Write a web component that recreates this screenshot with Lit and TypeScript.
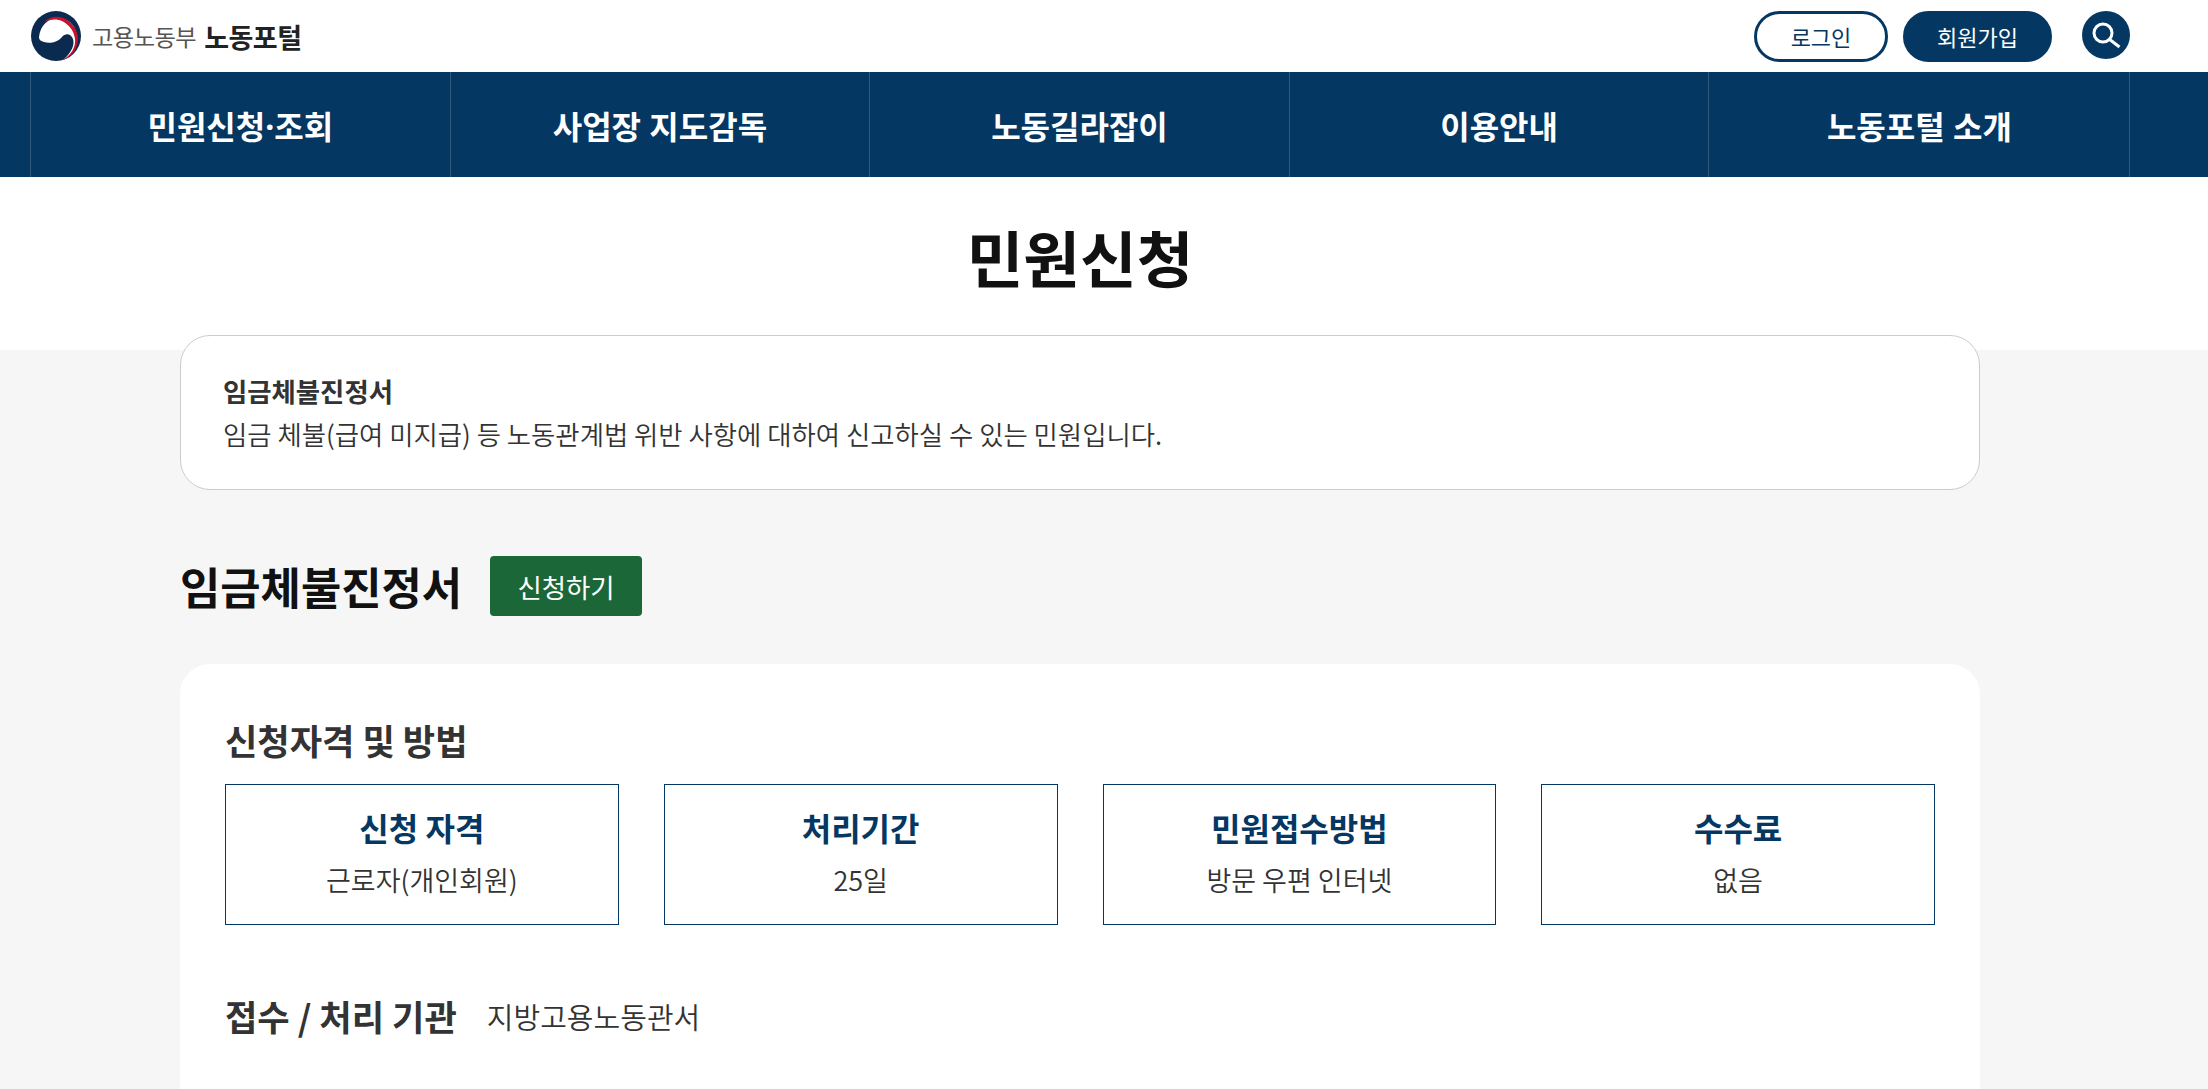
import { LitElement, html, css } from 'lit';
import { customElement } from 'lit/decorators.js';

const NAV_ITEMS = ['민원신청·조회', '사업장 지도감독', '노동길라잡이', '이용안내', '노동포털 소개'];

const INFO_BOXES = [
  { title: '신청 자격', text: '근로자(개인회원)' },
  { title: '처리기간', text: '25일' },
  { title: '민원접수방법', text: '방문 우편 인터넷' },
  { title: '수수료', text: '없음' },
];

@customElement('app-root')
export class AppRoot extends LitElement {
  static override styles = css`
    :host {
      display: block;
      height: 100vh;
      overflow: hidden;
      background: #f6f6f6;
      color: #333;
      font-family: 'Noto Sans CJK KR', 'Noto Sans', sans-serif;
    }

    /* Top bar */
    .top {
      height: 72px;
      background: #fff;
      display: flex;
      align-items: center;
      justify-content: space-between;
      padding: 0 78px 0 30px;
      box-sizing: border-box;
    }

    .logo {
      display: flex;
      align-items: center;
      gap: 11px;
    }

    .logo svg {
      width: 51px;
      height: 50px;
    }

    .logo-sub {
      font-size: 23.2px;
      color: #555;
      letter-spacing: -0.5px;
    }

    .logo-main {
      font-size: 27px;
      font-weight: 700;
      color: #222;
      margin-left: -3px;
      letter-spacing: -0.5px;
    }

    .actions {
      display: flex;
      align-items: center;
    }

    .btn {
      box-sizing: border-box;
      height: 51px;
      border-radius: 26px;
      border: 3px solid #053763;
      display: flex;
      align-items: center;
      justify-content: center;
      font-size: 22px;
    }

    .btn.login {
      width: 134px;
      color: #053763;
      background: #fff;
    }

    .btn.join {
      width: 149px;
      margin-left: 15px;
      color: #fff;
      background: #053763;
    }

    .search {
      width: 48px;
      height: 48px;
      margin-left: 30px;
      margin-bottom: 3px;
      border-radius: 50%;
      background: #053763;
      display: flex;
      align-items: center;
      justify-content: center;
    }

    /* Main nav */
    nav {
      height: 105px;
      background: #053763;
      padding-left: 30px;
      display: flex;
      font-family: 'Noto Sans', 'Noto Sans CJK KR', sans-serif;
    }

    .nav-item {
      box-sizing: border-box;
      width: 419.6px;
      border-left: 1px solid #315a7d;
      display: flex;
      align-items: center;
      justify-content: center;
      color: #fff;
      font-size: 32px;
      font-weight: 700;
    }

    .nav-item.last {
      width: 422px;
      border-right: 1px solid #315a7d;
    }

    /* Page title */
    .page-title {
      box-sizing: border-box;
      width: 2160px;
      height: 173px;
      padding-top: 38px;
      background: #fff;
      display: flex;
      justify-content: center;
      box-shadow: 48px 0 0 #fff;
    }

    h1 {
      margin: 0;
      font-size: 61.6px;
      line-height: 84px;
      font-weight: 700;
      color: #111;
    }

    .content {
      width: 1800px;
      margin: -15px 0 0 180px;
      position: relative;
    }

    .notice {
      box-sizing: border-box;
      height: 155px;
      padding: 34px 42px;
      background: #fff;
      border: 1px solid #ccc;
      border-radius: 30px;
    }

    .notice-title {
      font-size: 26.4px;
      font-weight: 700;
      line-height: 42px;
    }

    .notice-text {
      font-size: 26.4px;
      line-height: 44px;
      font-weight: 350;
    }

    .heading {
      display: flex;
      align-items: center;
      margin-top: 66px;
      height: 60px;
    }

    h2 {
      margin: 0;
      font-size: 43.8px;
      font-weight: 700;
      color: #111;
    }

    .apply {
      width: 152px;
      height: 60px;
      margin-left: 28px;
      border-radius: 4px;
      background: #1c6737;
      color: #fff;
      font-size: 26.4px;
      display: flex;
      align-items: center;
      justify-content: center;
    }

    .panel {
      box-sizing: border-box;
      margin-top: 48px;
      padding: 53px 45px 45px;
      min-height: 700px;
      background: #fff;
      border-radius: 30px;
    }

    h3 {
      margin: 0;
      font-size: 35.2px;
      line-height: 46px;
      font-weight: 700;
    }

    .boxes {
      display: grid;
      grid-template-columns: repeat(4, 1fr);
      gap: 45px;
      margin-top: 21px;
    }

    .box {
      box-sizing: border-box;
      height: 141px;
      padding-bottom: 3px;
      border: 1px solid #053763;
      display: flex;
      flex-direction: column;
      align-items: center;
      justify-content: center;
    }

    .box-title {
      font-size: 32px;
      font-weight: 700;
      line-height: 46px;
      color: #053763;
    }

    .box-text {
      font-size: 27px;
      line-height: 44px;
      margin-top: 8px;
      font-weight: 350;
    }

    .agency {
      display: flex;
      align-items: center;
      margin-top: 68px;
      gap: 30px;
    }

    .agency span {
      font-size: 29px;
      font-weight: 350;
    }
  `;

  override render() {
    return html`
      <div class="top">
        <div class="logo">
          <svg viewBox="0 0 51 50">
            <circle cx="26" cy="25" r="25" fill="#0b2a4f" />
            <path d="M9 26C10 14 19 7 28 7C39 7 47 16 47 27C47 37 41 45 34 48C41 42 45 34 43 28C41 22 35 22 32 26C28 31 20 33 14 31C10 30 9 28 9 26Z" fill="#fff" />
            <path d="M14 11C20 5 30 4 37 9C46 15 50 25 47 34C45 42 39 47 33 49C41 44 46 36 45 28C44 17 34 8.5 25 8.5C21 8.5 17 9.5 14 11Z" fill="#c8102e" />
          </svg>
          <span class="logo-sub">고용노동부</span>
          <span class="logo-main">노동포털</span>
        </div>
        <div class="actions">
          <div class="btn login">로그인</div>
          <div class="btn join">회원가입</div>
          <div class="search">
            <svg width="32" height="32" viewBox="0 0 32 32" fill="none" stroke="#fff" stroke-width="3">
              <circle cx="13" cy="14" r="9" />
              <path d="M19.7 20.5 L29.5 28" />
            </svg>
          </div>
        </div>
      </div>
      <nav>
        ${NAV_ITEMS.map(
          (item, i) => html`<div class="nav-item ${i === NAV_ITEMS.length - 1 ? 'last' : ''}">${item}</div>`
        )}
      </nav>
      <div class="page-title"><h1>민원신청</h1></div>
      <div class="content">
        <div class="notice">
          <div class="notice-title">임금체불진정서</div>
          <div class="notice-text">임금 체불(급여 미지급) 등 노동관계법 위반 사항에 대하여 신고하실 수 있는 민원입니다.</div>
        </div>
        <div class="heading">
          <h2>임금체불진정서</h2>
          <div class="apply">신청하기</div>
        </div>
        <div class="panel">
          <h3>신청자격 및 방법</h3>
          <div class="boxes">
            ${INFO_BOXES.map(
              (box) => html`
                <div class="box">
                  <div class="box-title">${box.title}</div>
                  <div class="box-text">${box.text}</div>
                </div>
              `
            )}
          </div>
          <div class="agency">
            <h3>접수 / 처리 기관</h3>
            <span>지방고용노동관서</span>
          </div>
        </div>
      </div>
    `;
  }
}
